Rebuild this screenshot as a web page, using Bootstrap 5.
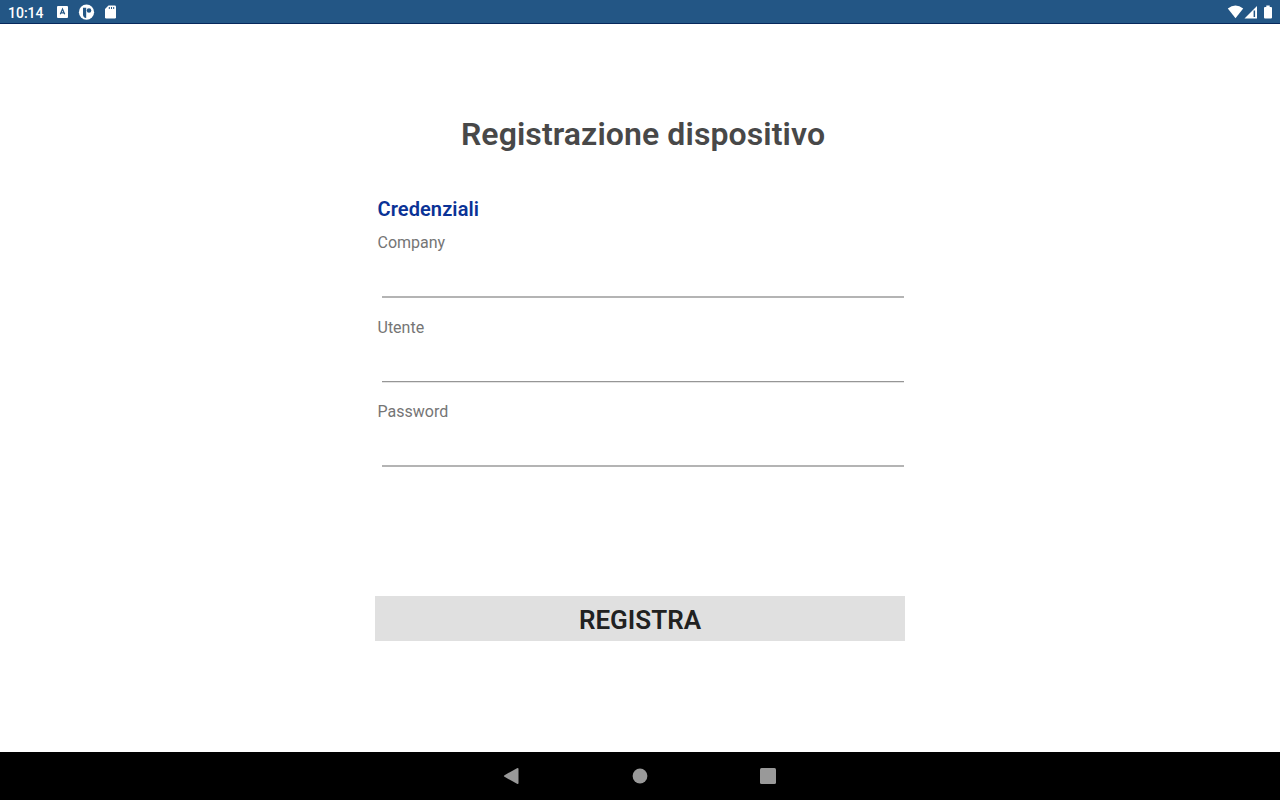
<!DOCTYPE html>
<html lang="it">
<head>
    <meta charset="UTF-8">
    <meta name="viewport" content="width=device-width, initial-scale=1.0">
    <title>Registrazione dispositivo</title>
    <!-- Bootstrap CSS -->
    <link href="https://cdn.jsdelivr.net/npm/bootstrap@5.3.0/dist/css/bootstrap.min.css" rel="stylesheet">
    <style>
        body {
            font-family: Roboto, sans-serif;
            background-color: #ffffff;
        }
        .status-bar {
            height: 24px;
            padding: 0 7px 0 8px;
            background-color: #235685;
            border-bottom: 1px solid #07285c;
        }
        .status-time {
            width: 48px;
            padding-top: 2px;
            font-size: 14px;
            font-weight: 500;
            line-height: 22px;
        }
        .status-bar svg, .system-nav svg {
            display: block;
        }
        .register-form {
            width: 530px;
            padding-top: 90px;
        }
        .form-title {
            padding-left: 6px;
            font-size: 32px;
            font-weight: 600;
            line-height: 40px;
            letter-spacing: 0.1px;
            color: #484848;
        }
        .section-title {
            margin: 42px 0 11px 2.5px;
            font-size: 20px;
            font-weight: 600;
            line-height: 26px;
            letter-spacing: 0.1px;
            color: #0a3296;
        }
        .field {
            height: 84px;
            padding: 0 1px 0 2.5px;
        }
        .field label {
            display: block;
            font-size: 16px;
            line-height: 20px;
            color: #757575;
        }
        .field .form-control {
            width: 522px;
            height: 45px;
            margin-left: 4px;
            border: 0;
            border-bottom: 2px solid #b4b4b4;
            box-shadow: none;
        }
        .field-user {
            height: 85px;
        }
        .field-user label {
            padding-top: 1px;
        }
        .field-user .form-control {
            height: 44px;
            border-bottom: 1px solid #969696;
            box-shadow: 0 1px 0 #e4e4e4;
        }
        .btn-register {
            height: 45px;
            margin-top: 110px;
            background-color: #e0e0e0;
            color: #212121;
            font-size: 26px;
            font-weight: 600;
            line-height: 48px;
        }
        .system-nav {
            height: 48px;
            gap: 104px;
        }
    </style>
</head>
<body class="vh-100 d-flex flex-column overflow-hidden">
    <header class="status-bar d-flex align-items-center text-white flex-shrink-0">
        <div class="status-time">10:14</div>
        <!-- Notification icons -->
        <svg width="62" height="23" viewBox="56 0 62 23" fill="#fff">
            <rect x="57" y="6" width="11" height="12" rx="1"/>
            <path d="M60.300 14.200 62.500 9 64.700 14.200M61 12.800h3" fill="none" stroke="#235685" stroke-width="1.2"/>
            <circle cx="86.500" cy="12.200" r="7.600"/>
            <path d="M83 7.800h3.200v10.200q-3.200-.6-3.200-3.600z" fill="#235685"/>
            <circle cx="89" cy="10.500" r="2.300" fill="#235685"/>
            <path d="M108.500 5.500h6.300q1.200 0 1.200 1.200v10.600q0 1.200-1.200 1.200h-8.600q-1.200 0-1.200-1.200V9z"/>
            <path d="M109.300 7v2M111.500 7v2M113.700 7v2" stroke="#235685" stroke-width="1"/>
        </svg>
        <!-- Wifi, signal and battery -->
        <svg class="ms-auto" width="46" height="23" viewBox="1227 0 46 23" fill="#fff">
            <path d="M1235.500 18.300 1227.800 8.500q7.700-5.900 15.400 0z"/>
            <path d="M1244.500 18.500 1257 6v12.500z"/>
            <path d="M1253.600 10.500h1.500v6.500h-1.500z" fill="#235685"/>
            <path d="M1266.300 5.500h3.400V7h1.300q1 0 1 1v9.500q0 1-1 1h-6q-1 0-1-1V8q0-1 1-1h1.300z"/>
        </svg>
    </header>

    <main class="flex-grow-1">
        <form class="register-form mx-auto">
            <h1 class="form-title text-center mb-0">Registrazione dispositivo</h1>
            <h2 class="section-title">Credenziali</h2>
            <div class="field">
                <label for="company">Company</label>
                <input type="text" class="form-control rounded-0 p-0" id="company">
            </div>
            <div class="field field-user">
                <label for="utente">Utente</label>
                <input type="text" class="form-control rounded-0 p-0" id="utente">
            </div>
            <div class="field">
                <label for="password">Password</label>
                <input type="password" class="form-control rounded-0 p-0" id="password">
            </div>
            <button type="button" class="btn btn-register d-block w-100 rounded-0 border-0 p-0">REGISTRA</button>
        </form>
    </main>

    <!-- System navigation: back, home, recents -->
    <nav class="system-nav d-flex justify-content-center align-items-center bg-black flex-shrink-0">
        <svg width="24" height="24" viewBox="0 0 24 24" fill="#999">
            <path d="M4.500 11.200 17 4.200q1.500-.7 1.500.8v14q0 1.500-1.500.8L4.500 12.800q-1.200-.8 0-1.600z"/>
        </svg>
        <svg width="24" height="24" viewBox="0 0 24 24" fill="#999">
            <circle cx="12" cy="12" r="7.400"/>
        </svg>
        <svg width="24" height="24" viewBox="0 0 24 24" fill="#999">
            <rect x="4" y="4" width="16" height="16" rx="1.500"/>
        </svg>
    </nav>

    <!-- Bootstrap JS -->
    <script src="https://cdn.jsdelivr.net/npm/bootstrap@5.3.0/dist/js/bootstrap.bundle.min.js"></script>
</body>
</html>
